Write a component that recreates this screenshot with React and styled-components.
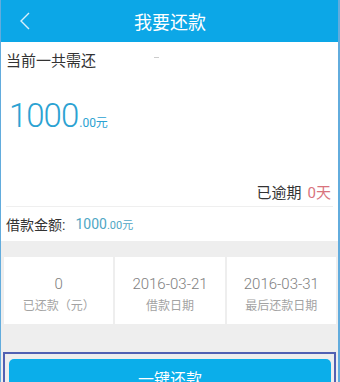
import React from 'react'
import styled, { createGlobalStyle } from 'styled-components';

const GlobalStyle = createGlobalStyle`
    body{
        margin: 0;
        background-color: #EEEEEE;
        font-family: Roboto, "Noto Sans CJK SC", sans-serif;
    }
`;

const Page = styled.div`
    width: 340px;
    height: 382px;
    box-sizing: border-box;
    overflow: hidden;
    background-color: #EEEEEE;
    border-left: 1px solid #62ACDD;
    border-right: 2px solid #62ACDD;
`;

const Header = styled.header`
    height: 42px;
    margin: 0 -2px 0 -1px;
    background-color: #0CA7E7;
    position: relative;
    display: flex;
    align-items: center;
    justify-content: center;
    color: #FFFFFF;
    font-size: 18px;
    .header__back{
        position: absolute;
        left: 19px;
        top: 12px;
    }
`;

const Summary = styled.section`
    background-color: #FFFFFF;
    padding: 0 5px;
`;

const Row = styled.div`
    height: ${(p) => p.$h || 34}px;
    display: flex;
    align-items: center;
    justify-content: ${(p) => (p.$right ? 'flex-end' : 'flex-start')};
    margin-top: ${(p) => p.$mt || 0}px;
    font-size: ${(p) => p.$fs || 14}px;
    color: #333333;
    .row__dash{
        margin-left: 58px;
        margin-top: -4px;
        width: 5px;
        height: 1px;
        background-color: #CCCCCC;
    }
`;

const Amount = styled.div`
    height: 40px;
    display: flex;
    align-items: baseline;
    margin-top: 20px;
    padding-left: 3px;
    color: #2BA2D2;
    line-height: 40px;
    .amount__big{
        font-size: 33px;
        font-weight: 300;
        letter-spacing: -1px;
    }
    .amount__small{
        font-size: 12px;
        margin-left: 1px;
    }
`;

const Overdue = styled.span`
    color: #D9737D;
    margin: 0 2px 0 6px;
`;

const Divider = styled.div`
    height: 1px;
    background-color: #EFEFEF;
`;

const Loan = styled.span`
    color: #4FA6C4;
    margin-left: 10px;
    font-size: 14px;
    small{
        font-size: 11px;
    }
`;

const Stats = styled.div`
    display: grid;
    grid-template-columns: 1fr 1fr 1fr;
    gap: 2px;
    padding: 16px 2px 0 3px;
`;

const StatCell = styled.div`
    height: 67px;
    background-color: #FFFFFF;
    display: flex;
    flex-direction: column;
    align-items: center;
    padding-top: 17px;
    box-sizing: border-box;
    .stat__value{
        font-size: 15px;
        font-weight: 300;
        color: #7E7E7E;
        line-height: 20px;
    }
    .stat__label{
        margin-top: 3px;
        font-size: 12px;
        color: #A3A3A3;
        line-height: 18px;
    }
`;

const ButtonFrame = styled.div`
    margin: 28px 2px 0 2px;
    border: 2px solid #5161B3;
    padding: 5px 3px 0 4px;
    height: 40px;
`;

const PayButton = styled.button`
    width: 100%;
    height: 44px;
    border: none;
    border-radius: 5px;
    background-color: #0BAEEA;
    color: #FFFFFF;
    font-family: Roboto, "Noto Sans CJK SC", sans-serif;
    font-size: 16px;
    padding: 0 0 6px 0;
`;

const stats = [
    { value: '0', label: '已还款（元）' },
    { value: '2016-03-21', label: '借款日期' },
    { value: '2016-03-31', label: '最后还款日期' },
];

function App() {
    return (
        <Page>
            <GlobalStyle />
            <Header>
                <svg className="header__back" width="12" height="18" viewBox="0 0 12 18">
                    <path d="M10 1 L2 9 L10 17" fill="none" stroke="#D8F0FB" strokeWidth="1.4" />
                </svg>
                我要还款
            </Header>
            <Summary>
                <Row $h={34} $fs={15}>
                    当前一共需还
                    <span className="row__dash" />
                </Row>
                <Amount>
                    <span className="amount__big">1000</span>
                    <span className="amount__small">.00元</span>
                </Amount>
                <Row $h={30} $mt={40} $fs={15} $right>
                    已逾期<Overdue>0天</Overdue>
                </Row>
                <Divider />
                <Row $h={34}>
                    借款金额:
                    <Loan>1000<small>.00元</small></Loan>
                </Row>
            </Summary>
            <Stats>
                {stats.map((item) => (
                    <StatCell key={item.label}>
                        <span className="stat__value">{item.value}</span>
                        <span className="stat__label">{item.label}</span>
                    </StatCell>
                ))}
            </Stats>
            <ButtonFrame>
                <PayButton>一键还款</PayButton>
            </ButtonFrame>
        </Page>
    )
}

export default App;
